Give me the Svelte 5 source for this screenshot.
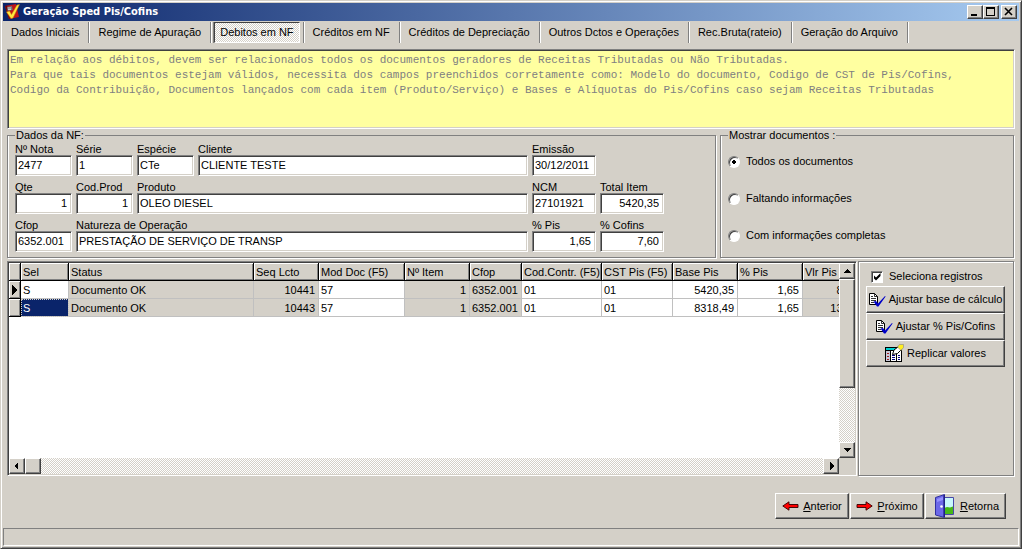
<script lang="ts">
	type Column = {
		title: string;
		width: number;
		align?: 'right';
		locked?: boolean;
	};

	type Field = {
		id: string;
		label: string;
		value: string;
		span?: number;
		right?: boolean;
		first?: boolean;
	};

	const tabs = [
		'Dados Iniciais',
		'Regime de Apuração',
		'Debitos em NF',
		'Créditos em NF',
		'Créditos de Depreciação',
		'Outros Dctos e Operações',
		'Rec.Bruta(rateio)',
		'Geração do Arquivo'
	];

	const help = [
		'Em relação aos débitos, devem ser relacionados todos os documentos geradores de Receitas Tributadas ou Não Tributadas.',
		'Para que tais documentos estejam válidos, necessita dos campos preenchidos corretamente como: Modelo do documento, Codigo de CST de Pis/Cofins,',
		'Codigo da Contribuição, Documentos lançados com cada item (Produto/Serviço) e Bases e Alíquotas do Pis/Cofins caso sejam Receitas Tributadas'
	].join('\n');

	const fields: Field[] = [
		{ id: 'nota', label: 'Nº Nota', value: '2477', first: true },
		{ id: 'serie', label: 'Série', value: '1' },
		{ id: 'especie', label: 'Espécie', value: 'CTe' },
		{ id: 'cliente', label: 'Cliente', value: 'CLIENTE TESTE' },
		{ id: 'emissao', label: 'Emissão', value: '30/12/2011' },
		{ id: 'qte', label: 'Qte', value: '1', right: true, first: true },
		{ id: 'codprod', label: 'Cod.Prod', value: '1', right: true },
		{ id: 'produto', label: 'Produto', value: 'OLEO DIESEL', span: 2 },
		{ id: 'ncm', label: 'NCM', value: '27101921' },
		{ id: 'total', label: 'Total Item', value: '5420,35', right: true },
		{ id: 'cfop', label: 'Cfop', value: '6352.001', first: true },
		{ id: 'natureza', label: 'Natureza de Operação', value: 'PRESTAÇÃO DE SERVIÇO DE TRANSP', span: 3 },
		{ id: 'pis', label: '% Pis', value: '1,65', right: true },
		{ id: 'cofins', label: '% Cofins', value: '7,60', right: true }
	];

	const filters = ['Todos os documentos', 'Faltando informações', 'Com informações completas'];

	const columns: Column[] = [
		{ title: 'Sel', width: 48 },
		{ title: 'Status', width: 185, locked: true },
		{ title: 'Seq Lcto', width: 65, align: 'right', locked: true },
		{ title: 'Mod Doc (F5)', width: 86 },
		{ title: 'Nº Item', width: 65, align: 'right', locked: true },
		{ title: 'Cfop', width: 52, locked: true },
		{ title: 'Cod.Contr. (F5)', width: 80 },
		{ title: 'CST Pis (F5)', width: 71 },
		{ title: 'Base Pis', width: 65, align: 'right' },
		{ title: '% Pis', width: 65, align: 'right' },
		{ title: 'Vlr Pis', width: 65, align: 'right', locked: true }
	];

	const rows = [
		['S', 'Documento OK', '10441', '57', '1', '6352.001', '01', '01', '5420,35', '1,65', '89,44'],
		['S', 'Documento OK', '10443', '57', '1', '6352.001', '01', '01', '8318,49', '1,65', '137,26']
	];

	let activeTab = $state('Debitos em NF');
	let filter = $state('Todos os documentos');
	let selectAll = $state(true);
</script>

{#snippet arrow(points: string)}
	<svg class="arrow" width="8" height="8" viewBox="0 0 8 8" shape-rendering="crispEdges" aria-hidden="true">
		<polygon {points} />
	</svg>
{/snippet}

{#snippet checkDoc()}
	<svg width="17" height="16" viewBox="0 0 17 16" aria-hidden="true">
		<path d="M.5 1.500h5l3 3v8h-8z" fill="#fff" stroke="#000" />
		<path d="M5.500 1.500v3h3M2 4.500h2M2 6.500h5M2 8.500h5M2 10.500h3" fill="none" stroke="#000" stroke-width=".8" />
		<path d="M4.500 9.500L7 9l2 2.500L16 4l.6.500L9.500 14.500H8z" fill="#0000c8" />
	</svg>
{/snippet}

<div class="window">
	<header class="titlebar">
		<svg class="logo" width="15" height="16" viewBox="0 0 15 16" aria-hidden="true">
			<path d="M0 2L11 0l3 13-10 2z" fill="#c01418" />
			<path d="M0 2l2-.4L5 15l-1 0z" fill="#700808" />
			<path d="M2 3l5-1 .6 4-5 1z" fill="#777" />
			<path d="M3 4h3M3 5.500h3" stroke="#ddd" stroke-width=".8" />
			<path d="M1.500 8l3-1 2 3.500L12 1l2.500-.5L8 14 6 14.500z" fill="#ffe840" stroke="#d08000" stroke-width=".5" />
		</svg>
		<h1>Geração Sped Pis/Cofins</h1>
		<div class="window-buttons">
			<button class="raised" aria-label="Minimizar">
				<svg width="10" height="10" shape-rendering="crispEdges"><path d="M1 7h6v2H1z" /></svg>
			</button>
			<button class="raised" aria-label="Maximizar">
				<svg width="10" height="10" shape-rendering="crispEdges">
					<path d="M0 0h9v9H0zM1 2v6h7V2z" fill-rule="evenodd" />
				</svg>
			</button>
			<button class="raised close" aria-label="Fechar">
				<svg width="10" height="10"><path d="M1 1l7 7M8 1L1 8" stroke="#000" stroke-width="1.600" /></svg>
			</button>
		</div>
	</header>

	<nav class="tabs">
		{#each tabs as tab (tab)}
			<div class="tab">
				<button class:active={tab === activeTab} onclick={() => (activeTab = tab)}>{tab}</button>
			</div>
		{/each}
	</nav>

	<main>
		<textarea class="sunken help" aria-label="Ajuda" readonly rows="5" value={help}></textarea>

		<div class="groups">
			<fieldset class="invoice">
				<legend>Dados da NF:</legend>
				<div class="fields">
					{#each fields as field (field.id)}
						<div class="field span-{field.span ?? 1}" class:first={field.first}>
							<label for={field.id}>{field.label}</label>
							<input id={field.id} class="sunken" class:right={field.right} value={field.value} />
						</div>
					{/each}
				</div>
			</fieldset>

			<fieldset class="filter">
				<legend>Mostrar documentos :</legend>
				<div class="options">
					{#each filters as option (option)}
						<label>
							<input type="radio" name="filter" value={option} bind:group={filter} />
							{option}
						</label>
					{/each}
				</div>
			</fieldset>
		</div>

		<div class="work">
			<section class="grid">
				<div class="viewport">
					<table>
						<colgroup>
							<col style="width: 12px" />
							{#each columns as column (column.title)}
								<col style="width: {column.width}px" />
							{/each}
						</colgroup>
						<thead>
							<tr>
								<th aria-label="Registro"></th>
								{#each columns as column (column.title)}
									<th>{column.title}</th>
								{/each}
							</tr>
						</thead>
						<tbody>
							{#each rows as row, r (r)}
								<tr>
									<th>
										{#if r === 0}{@render arrow('1,-1 6,4 1,9')}{/if}
									</th>
									{#each row as cell, c (c)}
										<td
											class:right={columns[c].align === 'right'}
											class:locked={columns[c].locked}
											class:selected={r === 1 && c === 0}>{cell}</td
										>
									{/each}
								</tr>
							{/each}
						</tbody>
					</table>
				</div>
				<div class="scroll vertical">
					<button class="raised" aria-label="Acima">{@render arrow('4,2 8,6 0,6')}</button>
					<div class="thumb raised"></div>
					<button class="raised" aria-label="Abaixo">{@render arrow('0,2 8,2 4,6')}</button>
				</div>
				<div class="scroll horizontal">
					<button class="raised" aria-label="Esquerda">{@render arrow('5,0 5,8 1,4')}</button>
					<div class="thumb raised"></div>
					<button class="raised" aria-label="Direita">{@render arrow('3,0 7,4 3,8')}</button>
				</div>
			</section>

			<aside class="actions">
				<label>
					<input type="checkbox" bind:checked={selectAll} />
					Seleciona registros
				</label>
				<button class="raised">{@render checkDoc()}Ajustar base de cálculo</button>
				<button class="raised">{@render checkDoc()}Ajustar % Pis/Cofins</button>
				<button class="raised">
					<svg width="19" height="19" viewBox="0 0 19 19" aria-hidden="true">
						<path d="M0 3h17v15H0z" />
						<path d="M1 4h10v2H1z" fill="#00d0d0" />
						<path d="M1 7h4v10H1z" fill="#c8c8d8" />
						<path d="M6 7h5v10H6zM12 7h4v10h-4z" fill="#fff" />
						<path d="M2 9.500h2M2 12.500h2M2 15.500h2" stroke="#a02020" />
						<path d="M7 11.500h3M7 13.500h3M7 15.500h3M13 11.500h2M13 13.500h2M13 15.500h2" stroke="#000080" />
						<path d="M7.500 10.500L9 6l4.500-3.500 3 3-4 4z" fill="#fff" stroke="#000" />
						<path d="M12.500 3L14.500.5h4V3.500L16 6.500z" fill="#ffee20" stroke="#888" stroke-width=".6" />
					</svg>
					Replicar valores
				</button>
			</aside>
		</div>

		<footer>
			<button class="raised">
				<svg width="17" height="10" viewBox="0 0 17 10" aria-hidden="true">
					<path d="M.8 5L7 .8v2.700h9v3H7v2.700z" fill="#f00" stroke="#300" stroke-width=".9" />
				</svg>
				<span><u>A</u>nterior</span>
			</button>
			<button class="raised">
				<svg width="17" height="10" viewBox="0 0 17 10" aria-hidden="true">
					<path d="M16.200 5L10 .8v2.700H1v3h9v2.700z" fill="#f00" stroke="#300" stroke-width=".9" />
				</svg>
				<span><u>P</u>róximo</span>
			</button>
			<button class="raised exit">
				<svg width="20" height="24" viewBox="0 0 20 24" aria-hidden="true">
					<path d="M8.500 3.500h10v17h-10z" fill="#c8f8fc" stroke="#4848a8" />
					<path d="M9 14l3-1 3 .5 3-1V20H9z" fill="#48b818" />
					<path d="M.5 3.500L9.500.5v23l-9-2.500z" fill="#6c68e8" stroke="#3030a0" />
					<path d="M2 5l6-2v3L2 8z" fill="#9490ff" />
					<path d="M9 1v22" stroke="#101070" />
					<circle cx="6.500" cy="12.500" r="1.300" fill="#fff" />
				</svg>
				<span><u>R</u>etorna</span>
			</button>
		</footer>
	</main>

	<div class="statusbar"></div>
</div>

<style>
	:global(body) {
		margin: 0;
		background: #d4d0c8;
	}
	.window {
		box-sizing: border-box;
		display: flex;
		flex-direction: column;
		min-height: 100vh;
		padding: 2px;
		border: 1px solid;
		border-color: #d4d0c8 #404040 #404040 #d4d0c8;
		box-shadow:
			inset 1px 1px #fff,
			inset -1px -1px #808080;
		background: #d4d0c8;
		color: #000;
		font: 11px/13px 'Liberation Sans', Arial, sans-serif;
	}
	button,
	input,
	textarea {
		box-sizing: border-box;
		margin: 0;
		padding: 0;
		border: 0;
		border-radius: 0;
		color: inherit;
		font: inherit;
	}
	button {
		display: flex;
		align-items: center;
		justify-content: center;
		background: #d4d0c8;
		white-space: nowrap;
	}
	svg {
		flex: none;
	}
	.arrow {
		display: block;
		overflow: visible;
	}
	.raised {
		border: 1px solid;
		border-color: #fff #404040 #404040 #fff;
		box-shadow: inset -1px -1px #808080;
		background: #d4d0c8;
	}
	.sunken {
		border: 1px solid;
		border-color: #808080 #fff #fff #808080;
		box-shadow:
			inset 1px 1px #404040,
			inset -1px -1px #d4d0c8;
		background: #fff;
	}
	.right {
		text-align: right;
	}

	.titlebar {
		display: flex;
		align-items: center;
		height: 18px;
		padding: 0 2px;
		background: linear-gradient(to right, #0a246a, #a6caf0);
	}
	h1 {
		flex: 1;
		margin: 0 0 0 3px;
		color: #fff;
		font: bold 11px/16px 'DejaVu Sans Condensed', Tahoma, sans-serif;
	}
	.window-buttons {
		display: flex;
	}
	.window-buttons button {
		width: 16px;
		height: 14px;
	}
	.window-buttons .close {
		margin-left: 2px;
	}

	.tabs {
		display: flex;
		padding-top: 1px;
	}
	.tab {
		display: flex;
		height: 21px;
		padding: 0 3px;
		border-right: 1px solid #808080;
		box-shadow: 1px 0 #fff;
	}
	.tab button {
		padding: 0 5px;
		border: 1px solid transparent;
	}
	.tab:first-child button {
		padding-left: 4px;
	}
	.tab .active {
		border: 1px solid;
		border-color: #404040 #fff #fff #404040;
		box-shadow: -1px 0 #808080;
		background: repeating-conic-gradient(#fff 0 25%, #d4d0c8 0 50%) 0 0 / 2px 2px;
	}

	main {
		display: flex;
		flex: 1;
		flex-direction: column;
		margin: 6px 4px 0;
	}
	.help {
		height: 80px;
		padding: 3px 2px;
		overflow: hidden;
		background: #ffffa0;
		color: #808080;
		font: 11px/15px 'Liberation Mono', 'Courier New', monospace;
		white-space: pre;
		resize: none;
	}

	.groups {
		display: flex;
		gap: 4px;
		padding-right: 1px;
	}
	fieldset {
		box-sizing: border-box;
		min-width: 0;
		margin: 0;
		padding: 0 7px;
		border: 1px solid #808080;
		box-shadow:
			1px 1px #fff,
			inset 1px 0 #fff;
	}
	legend {
		padding: 0 1px;
		background: #d4d0c8;
		line-height: 12px;
	}
	.invoice {
		flex: 1;
	}
	.filter {
		flex: none;
		width: 294px;
	}
	.fields {
		display: grid;
		grid-template-columns: 57px 57px 57px 1fr 64px 64px;
		gap: 5px 4px;
		padding: 2px 44px 5px 0;
	}
	.field {
		display: flex;
		flex-direction: column;
	}
	.field label {
		line-height: 12px;
	}
	.field input {
		width: 100%;
		height: 21px;
		padding: 0 4px 1px 2px;
	}
	.first {
		grid-column-start: 1;
	}
	.span-2 {
		grid-column: span 2;
	}
	.span-3 {
		grid-column: span 3;
	}
	.options {
		display: flex;
		flex-direction: column;
		gap: 24px;
		padding-top: 14px;
	}
	.options label,
	.actions label {
		display: flex;
		align-items: center;
		gap: 6px;
	}
	input[type='radio'],
	input[type='checkbox'] {
		appearance: none;
		width: 12px;
		height: 12px;
		border: 1px solid;
		border-color: #808080 #fff #fff #808080;
		box-shadow: inset 1px 1px #404040;
		background: #fff;
	}
	input[type='radio'] {
		border-radius: 50%;
	}
	input[type='radio']:checked {
		background: radial-gradient(circle, #000 0 2px, #fff 2px);
	}
	input[type='checkbox']:checked {
		background: #fff
			url("data:image/svg+xml,%3Csvg xmlns='http://www.w3.org/2000/svg' viewBox='0 0 10 10'%3E%3Cpath d='M2 3.500v3l2 2 4.500-4.500V1L4 5.500z'/%3E%3C/svg%3E")
			center / 10px 10px no-repeat;
	}

	.work {
		display: flex;
		flex: 1;
		gap: 1px;
		margin-top: 3px;
		padding-right: 1px;
	}
	.grid {
		display: grid;
		flex: 1;
		grid-template-rows: 1fr 16px;
		grid-template-columns: 1fr 16px;
		min-width: 0;
		padding: 1px;
		border: 1px solid;
		border-color: #808080 #fff #fff #808080;
		box-shadow: inset 1px 1px #404040;
	}
	.viewport {
		min-width: 0;
		overflow: hidden;
		background: #fff;
	}
	table {
		width: 859px;
		border-spacing: 0;
		table-layout: fixed;
	}
	th,
	td {
		box-sizing: border-box;
		height: 18px;
		padding: 0 2px;
		overflow: hidden;
		border-right: 1px solid #c0c0c0;
		border-bottom: 1px solid #c0c0c0;
		line-height: 16px;
		text-align: left;
		white-space: nowrap;
	}
	th {
		padding-right: 0;
		border-color: #000;
		box-shadow:
			inset 1px 1px #fff,
			inset -1px -1px #808080;
		background: #d4d0c8;
		font-weight: normal;
	}
	td.right {
		padding-right: 3px;
		text-align: right;
	}
	.locked {
		background: #d4d0c8;
	}
	.selected {
		outline: 1px dotted #d4d0c8;
		outline-offset: -1px;
		background: #0a246a;
		color: #fff;
	}
	.scroll {
		display: flex;
		background: repeating-conic-gradient(#fff 0 25%, #d4d0c8 0 50%) 0 0 / 2px 2px;
	}
	.scroll button {
		width: 16px;
		height: 16px;
	}
	.vertical {
		flex-direction: column;
	}
	.vertical .thumb {
		flex: 0 0 107px;
	}
	.horizontal .thumb {
		flex: 0 0 14px;
	}
	.vertical button:last-child {
		margin-top: auto;
	}
	.horizontal button:last-child {
		margin-left: auto;
	}

	.actions {
		box-sizing: border-box;
		flex: none;
		width: 156px;
		padding: 8px 8px 0 7px;
		border: 1px solid #808080;
		box-shadow:
			1px 1px #fff,
			inset 1px 1px #fff;
	}
	.actions label {
		margin-bottom: 3px;
		padding-left: 5px;
	}
	.actions button {
		gap: 3px;
		width: 100%;
		height: 27px;
	}

	footer {
		display: flex;
		justify-content: flex-end;
		gap: 1px;
		padding: 17px 9px 9px 0;
	}
	footer button {
		gap: 4px;
		width: 74px;
		height: 26px;
	}
	footer .exit {
		gap: 5px;
		width: 81px;
		padding-left: 3px;
	}
	.statusbar {
		height: 16px;
		border: 1px solid;
		border-color: #808080 #fff #fff #808080;
	}
</style>
